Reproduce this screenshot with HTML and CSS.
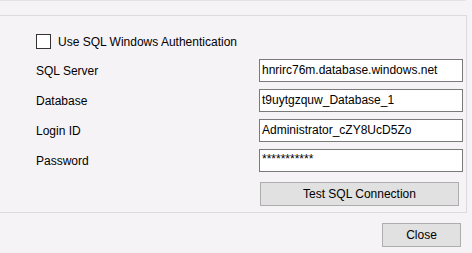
FILE: index.html
```html
<!DOCTYPE html>
<html>
<head>
<meta charset="utf-8">
<link rel="stylesheet" href="styles.css">
</head>
<body>
<div class="top-strip"></div>
<div class="group">
  <label class="check-row">
    <span class="checkbox"></span>
    <span class="check-label">Use SQL Windows Authentication</span>
  </label>
  <div class="form">
    <span class="label">SQL Server</span>
    <div class="field">hnrirc76m.database.windows.net</div>
    <span class="label">Database</span>
    <div class="field">t9uytgzquw_Database_1</div>
    <span class="label">Login ID</span>
    <div class="field">Administrator_cZY8UcD5Zo</div>
    <span class="label">Password</span>
    <div class="field password">***********</div>
    <span></span>
    <button class="btn test-btn">Test SQL Connection</button>
  </div>
</div>
<div class="footer">
  <button class="btn close-btn">Close</button>
</div>
</body>
</html>
```

FILE: styles.css
```css
html, body {
  margin: 0;
  padding: 0;
  background: #f6f3f7;
  font-family: "Liberation Sans", Arial, sans-serif;
  font-size: 12px;
  color: #000;
  width: 472px;
  height: 253px;
  overflow: hidden;
}

.top-strip {
  width: 466px;
  height: 15px;
  border-top: 1px solid #e6e3e8;
  box-sizing: border-box;
}

.group {
  width: 467px;
  box-sizing: border-box;
  border-top: 1px solid #dcdadf;
  border-right: 1px solid #dcdadf;
  border-bottom: 1px solid #dcdadf;
  padding: 18px 0 6px 36px;
}

.check-row {
  display: flex;
  align-items: center;
  height: 15px;
  gap: 7px;
}

.checkbox {
  width: 15px;
  height: 15px;
  box-sizing: border-box;
  border: 1px solid #333;
  background: #fff;
}

.check-label {
  line-height: 15px;
  padding-top: 1px;
}

.form {
  display: grid;
  grid-template-columns: 223px 204px;
  grid-template-rows: 23px 23px 23px 23px 27px;
  row-gap: 7px;
  margin-top: 10px;
  align-items: center;
}

.field {
  height: 23px;
  box-sizing: border-box;
  border: 1px solid #7a7a7a;
  background: #fff;
  padding: 0 2px;
  line-height: 21px;
  white-space: nowrap;
  overflow: hidden;
}

.password {
  line-height: 19px;
  letter-spacing: 0;
}

.btn {
  font-family: "Liberation Sans", Arial, sans-serif;
  font-size: 12px;
  color: #000;
  background: #e1e1e1;
  border: 1px solid #adadad;
  box-sizing: border-box;
  padding: 0;
}

.test-btn {
  width: 199px;
  height: 24px;
  margin-left: 1px;
  align-self: end;
}

.footer {
  display: flex;
  justify-content: flex-end;
  padding: 10px 11px 0 0;
  width: 472px;
  box-sizing: border-box;
}

.close-btn {
  width: 79px;
  height: 24px;
}
```
